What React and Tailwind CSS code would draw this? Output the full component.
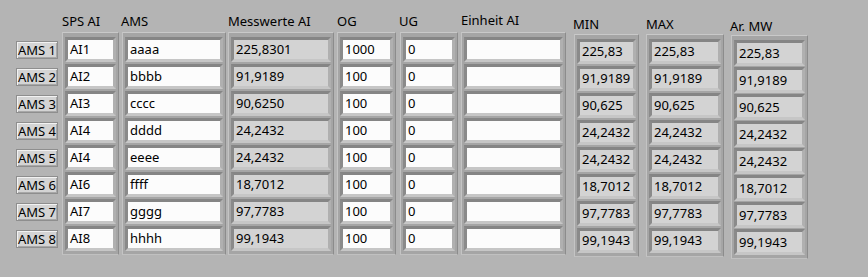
import React from 'react';

const rows = [
  { sps: 'AI1', ams: 'aaaa', mw: '225,8301', og: '1000', ug: '0', min: '225,83', max: '225,83', ar: '225,83' },
  { sps: 'AI2', ams: 'bbbb', mw: '91,9189', og: '100', ug: '0', min: '91,9189', max: '91,9189', ar: '91,9189' },
  { sps: 'AI3', ams: 'cccc', mw: '90,6250', og: '100', ug: '0', min: '90,625', max: '90,625', ar: '90,625' },
  { sps: 'AI4', ams: 'dddd', mw: '24,2432', og: '100', ug: '0', min: '24,2432', max: '24,2432', ar: '24,2432' },
  { sps: 'AI4', ams: 'eeee', mw: '24,2432', og: '100', ug: '0', min: '24,2432', max: '24,2432', ar: '24,2432' },
  { sps: 'AI6', ams: 'ffff', mw: '18,7012', og: '100', ug: '0', min: '18,7012', max: '18,7012', ar: '18,7012' },
  { sps: 'AI7', ams: 'gggg', mw: '97,7783', og: '100', ug: '0', min: '97,7783', max: '97,7783', ar: '97,7783' },
  { sps: 'AI8', ams: 'hhhh', mw: '99,1943', og: '100', ug: '0', min: '99,1943', max: '99,1943', ar: '99,1943' },
];

const ArrayColumn = ({ label, field, className, headClass, cellClass, gapClass }) => (
  <div className={`flex flex-col ${className}`}>
    <div className={`h-[16px] leading-[16px] whitespace-nowrap ${headClass}`}>{label}</div>
    <div
      className={`flex flex-col ${gapClass} border border-t-[#c9c9c9] border-l-[#c4c4c4] border-r-[#8c8c8c] border-b-[#c0c0c0] bg-[#a5a5a5] px-[2px] pt-[4px] pb-[3px]`}
    >
      {rows.map((r, i) => (
        <div
          key={i}
          className="border-[3px] border-t-[#858585] border-l-[#8a8a8a] border-r-[#b0b0b0] border-b-[#c6c6c6]"
        >
          <div className={`${cellClass} px-[2px] text-black whitespace-nowrap overflow-hidden`}>
            {field ? r[field] : ''}
          </div>
        </div>
      ))}
    </div>
  </div>
);

export default function App() {
  return (
    <div
      className="w-[868px] h-[277px] bg-[#b4b4b4] text-[13px] text-black overflow-hidden"
      style={{ fontFamily: '"Noto Sans", "DejaVu Sans", sans-serif' }}
    >
      <div className="flex items-start pl-[16px]">
        <div className="flex flex-col gap-[9px] mt-[41px]">
          {rows.map((_, i) => (
            <button
              key={i}
              className="w-[42px] h-[18px] leading-[16px] text-center bg-[#d4d4d4] border border-[#8e8e8e] shadow-[inset_1px_1px_0_#f2f2f2,inset_-1px_-1px_0_#a8a8a8] whitespace-nowrap"
            >
              AMS {i + 1}
            </button>
          ))}
        </div>

        <ArrayColumn label="SPS AI" field="sps" className="ml-[4px] mt-[13px]" headClass="mb-[3px]" gapClass="gap-[2px]" cellClass="w-[45px] h-[19px] leading-[19px] bg-[#fcfcfc]" />
        <ArrayColumn label="AMS" field="ams" className="ml-[3px] mt-[13px]" headClass="mb-[3px] -ml-[1px]" gapClass="gap-[2px]" cellClass="w-[92px] h-[19px] leading-[19px] bg-[#fcfcfc]" />
        <ArrayColumn label="Messwerte AI" field="mw" className="ml-[2px] mt-[13px]" headClass="mb-[3px]" gapClass="gap-[2px]" cellClass="w-[94px] h-[19px] leading-[19px] bg-[#d3d3d3]" />
        <ArrayColumn label="OG" field="og" className="ml-[3px] mt-[13px]" headClass="mb-[3px]" gapClass="gap-[2px]" cellClass="w-[47px] h-[19px] leading-[19px] bg-[#fcfcfc]" />
        <ArrayColumn label="UG" field="ug" className="ml-[4px] mt-[13px]" headClass="mb-[3px] -ml-[1px]" gapClass="gap-[2px]" cellClass="w-[46px] h-[19px] leading-[19px] bg-[#fcfcfc]" />
        <ArrayColumn label="Einheit AI" field={null} className="ml-[3px] mt-[12px]" headClass="mb-[4px]" gapClass="gap-[2px]" cellClass="w-[93px] h-[19px] leading-[19px] bg-[#fcfcfc]" />
        <ArrayColumn label="MIN" field="min" className="ml-[8px] mt-[16px]" headClass="mb-[2px] -ml-[1px]" gapClass="gap-[2px]" cellClass="w-[53px] h-[19px] leading-[19px] bg-[#d3d3d3]" />
        <ArrayColumn label="MAX" field="max" className="ml-[7px] mt-[16px]" headClass="mb-[2px]" gapClass="gap-[2px]" cellClass="w-[66px] h-[19px] leading-[19px] bg-[#d3d3d3]" />
        <ArrayColumn label="Ar. MW" field="ar" className="ml-[7px] mt-[18px]" headClass="mb-[1px] -ml-[1px]" gapClass="gap-[1px]" cellClass="w-[65px] h-[20px] leading-[21px] bg-[#d3d3d3]" />
      </div>
    </div>
  );
}
